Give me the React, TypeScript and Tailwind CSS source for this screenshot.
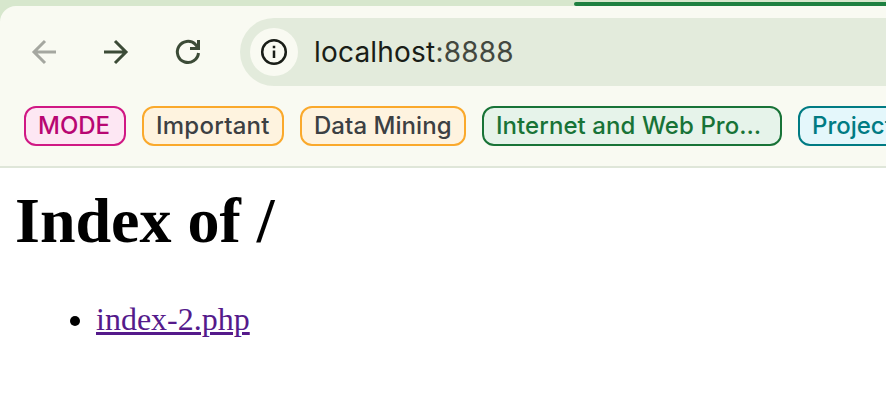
function Chip({ label, className }: { label: string; className: string }) {
  return (
    <div className={`flex h-10 shrink-0 items-center whitespace-nowrap rounded-[12px] border-2 pl-3 text-[24px] leading-none font-medium ${className}`}>
      <span>{label}</span>
    </div>
  );
}

export default function App() {
  return (
    <div className="flex h-[414px] w-[886px] flex-col overflow-hidden bg-white">
      <header className="flex h-[168px] shrink-0 flex-col bg-[#d7e7cd] font-['Inter',sans-serif]">
        <div className="flex h-1.5 shrink-0 items-end justify-end">
          <div className="h-1 w-[312px] rounded-l-[2px] bg-[#1e8040]" />
        </div>
        <div className="flex flex-1 flex-col rounded-tl-[16px] border-b-2 border-[#dfe6d9] bg-[#f9faf2]">
          <div className="flex h-20 items-center pt-3">
            <svg width="240" height="68" viewBox="0 18 240 68" fill="none" strokeWidth="3" className="shrink-0">
              <path d="M56 52H34M45 41L34 52L45 63" stroke="#a5a7a0" />
              <path d="M104 52H126M115 41L126 52L115 63" stroke="#3c4b37" />
              <path d="M198.5 53A10.6 10.6 0 1 1 195.2 44.2L198 47.5M198.5 40V48.5H190" stroke="#3c4b37" />
            </svg>
            <div className="flex h-[68px] flex-1 items-center rounded-l-full bg-[#e3ebdc] pl-2.5">
              <div className="flex size-12 shrink-0 items-center justify-center rounded-full bg-[#f9faf2]">
                <svg width="28" height="28" viewBox="0 0 28 28" fill="none" stroke="#191d17" strokeWidth="2.5">
                  <circle cx="14" cy="14" r="11.8" />
                  <path d="M14 12.5V20M14 7.7V10.3" />
                </svg>
              </div>
              <div className="pl-4 text-[28px] leading-none tracking-[0.2px] text-[#191d17]">
                localhost<span className="text-[#43483f]">:8888</span>
              </div>
            </div>
          </div>
          <nav className="flex gap-4 overflow-hidden pt-5 pl-6">
            <Chip label="MODE" className="w-[102px] border-[#d01884] bg-[#fde7f3] text-[#b80672]" />
            <Chip label="Important" className="w-[142px] border-[#faa92c] bg-[#fef3df] tracking-[0.25px] text-[#3c4043]" />
            <Chip label="Data Mining" className="w-[166px] border-[#faa92c] bg-[#fef3df] tracking-[0.05px] text-[#3c4043]" />
            <Chip label="Internet and Web Pro…" className="w-[300px] border-[#187337] bg-[#e6f3ea] tracking-[0.07px] text-[#187337]" />
            <Chip label="Projects" className="w-[142px] border-[#007b83] bg-[#e4f7fb] text-[#007b83]" />
          </nav>
        </div>
      </header>
      <main className="px-4 font-['Liberation_Serif',serif] text-black">
        <h1 className="-ml-px pt-4 text-[64px] leading-[74px] font-bold">Index of /</h1>
        <ul className="flex pt-[43px] pl-[54px] text-[32px] leading-[37px]">
          <li className="flex items-center gap-4">
            <span className="mt-0.5 size-2.5 rounded-full bg-black" />
            <a href="#" className="text-[#551a8b] underline decoration-[3px] underline-offset-[2px]">index-2.php</a>
          </li>
        </ul>
      </main>
    </div>
  );
}
